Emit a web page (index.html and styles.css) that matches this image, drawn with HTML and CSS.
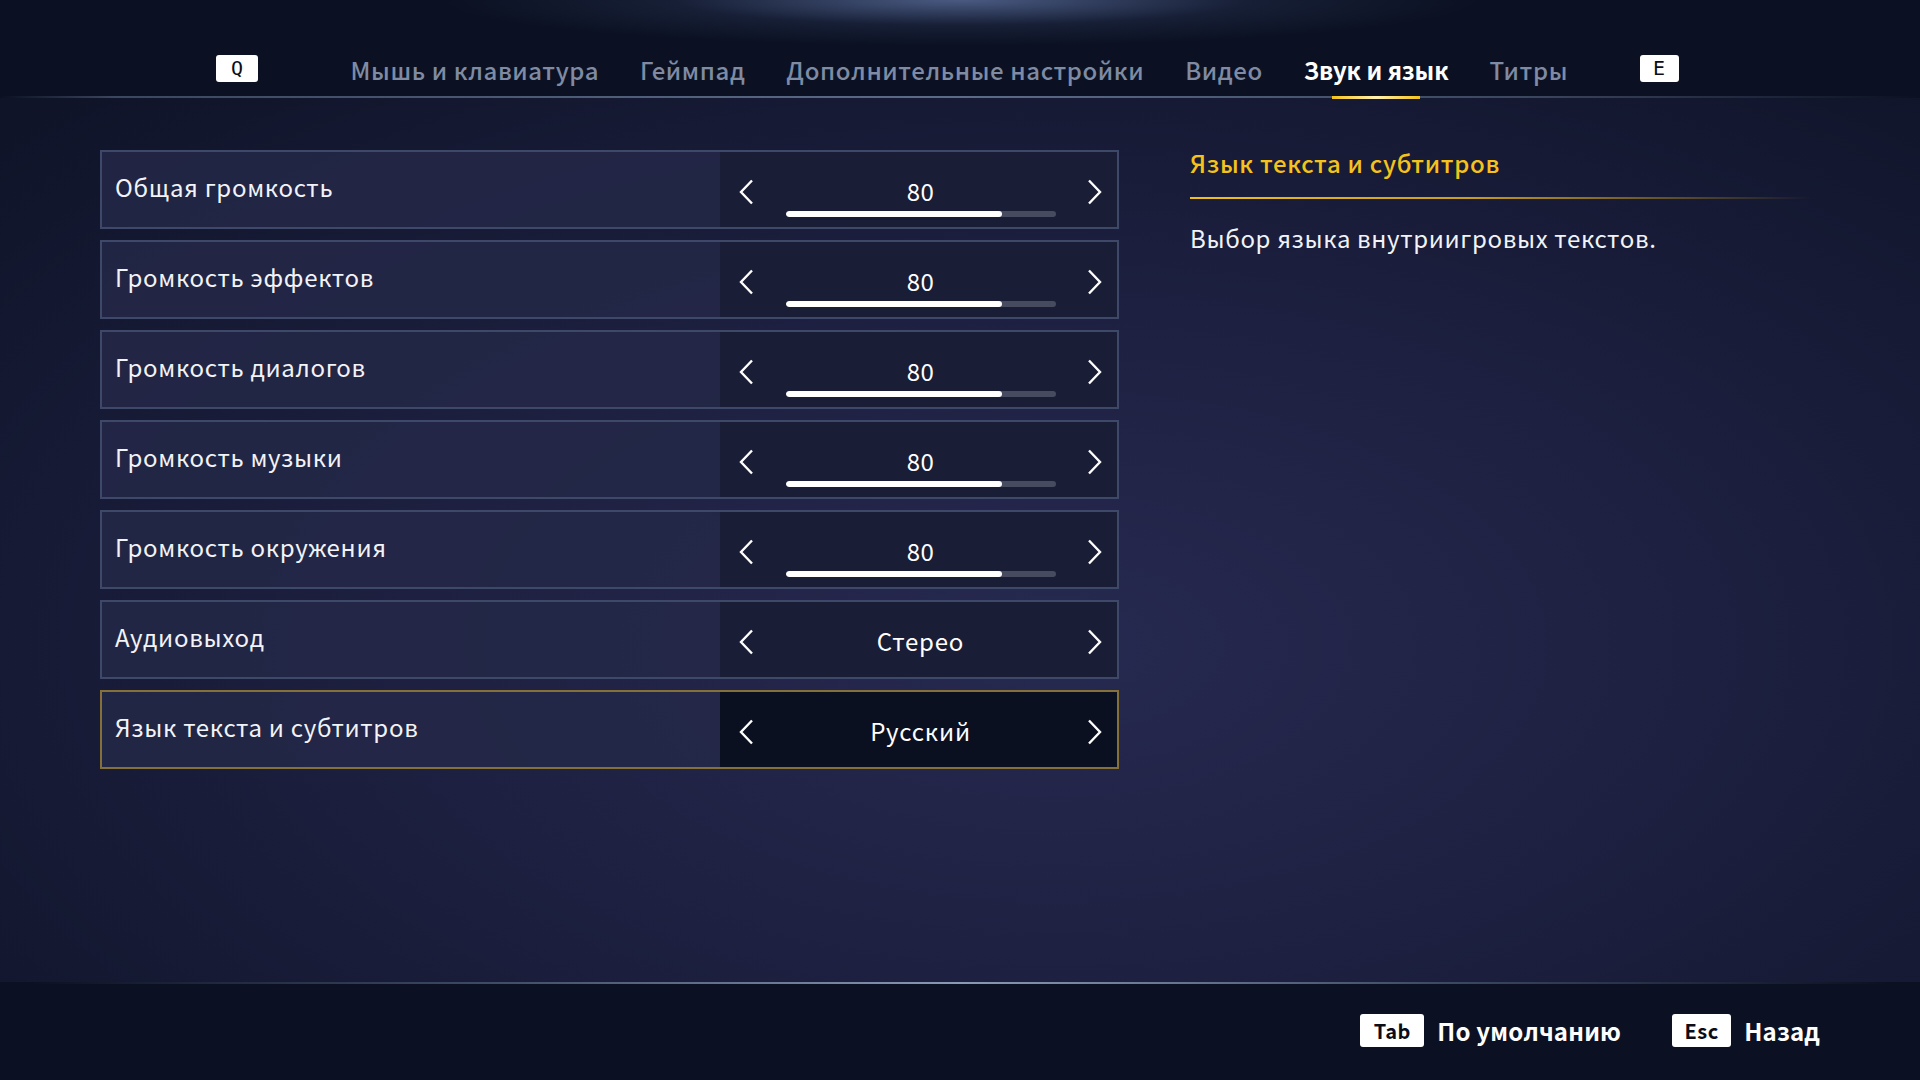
FILE: index.html
```html
<!DOCTYPE html>
<html lang="ru">
<head>
  <meta charset="UTF-8" />
  <title>Настройки — Звук и язык</title>
  <link rel="stylesheet" href="styles.css">
</head>
<body>
<div class="screen">
  <div class="header">
    <div class="key key-q">Q</div>
    <div class="tabs">
      <div class="tab">Мышь и клавиатура</div>
      <div class="tab">Геймпад</div>
      <div class="tab">Дополнительные настройки</div>
      <div class="tab">Видео</div>
      <div class="tab active">Звук и язык</div>
      <div class="tab">Титры</div>
    </div>
    <div class="key key-e">E</div>
  </div>

  <div class="main">
    <div class="list">
      <div class="row">
        <div class="label">Общая громкость</div>
        <div class="control">
          <svg class="arrow" viewBox="0 0 16 26"><path d="M14 1.5 L3 13 L14 24.5"/></svg>
          <div class="mid">
            <div class="value">80</div>
            <div class="bar"><div class="fill" style="width:80%"></div></div>
          </div>
          <svg class="arrow" viewBox="0 0 16 26"><path d="M2 1.5 L13 13 L2 24.5"/></svg>
        </div>
      </div>
      <div class="row">
        <div class="label">Громкость эффектов</div>
        <div class="control">
          <svg class="arrow" viewBox="0 0 16 26"><path d="M14 1.5 L3 13 L14 24.5"/></svg>
          <div class="mid">
            <div class="value">80</div>
            <div class="bar"><div class="fill" style="width:80%"></div></div>
          </div>
          <svg class="arrow" viewBox="0 0 16 26"><path d="M2 1.5 L13 13 L2 24.5"/></svg>
        </div>
      </div>
      <div class="row">
        <div class="label">Громкость диалогов</div>
        <div class="control">
          <svg class="arrow" viewBox="0 0 16 26"><path d="M14 1.5 L3 13 L14 24.5"/></svg>
          <div class="mid">
            <div class="value">80</div>
            <div class="bar"><div class="fill" style="width:80%"></div></div>
          </div>
          <svg class="arrow" viewBox="0 0 16 26"><path d="M2 1.5 L13 13 L2 24.5"/></svg>
        </div>
      </div>
      <div class="row">
        <div class="label">Громкость музыки</div>
        <div class="control">
          <svg class="arrow" viewBox="0 0 16 26"><path d="M14 1.5 L3 13 L14 24.5"/></svg>
          <div class="mid">
            <div class="value">80</div>
            <div class="bar"><div class="fill" style="width:80%"></div></div>
          </div>
          <svg class="arrow" viewBox="0 0 16 26"><path d="M2 1.5 L13 13 L2 24.5"/></svg>
        </div>
      </div>
      <div class="row">
        <div class="label">Громкость окружения</div>
        <div class="control">
          <svg class="arrow" viewBox="0 0 16 26"><path d="M14 1.5 L3 13 L14 24.5"/></svg>
          <div class="mid">
            <div class="value">80</div>
            <div class="bar"><div class="fill" style="width:80%"></div></div>
          </div>
          <svg class="arrow" viewBox="0 0 16 26"><path d="M2 1.5 L13 13 L2 24.5"/></svg>
        </div>
      </div>
      <div class="row">
        <div class="label">Аудиовыход</div>
        <div class="control">
          <svg class="arrow" viewBox="0 0 16 26"><path d="M14 1.5 L3 13 L14 24.5"/></svg>
          <div class="mid">
            <div class="value text">Стерео</div>
          </div>
          <svg class="arrow" viewBox="0 0 16 26"><path d="M2 1.5 L13 13 L2 24.5"/></svg>
        </div>
      </div>
      <div class="row selected">
        <div class="label">Язык текста и субтитров</div>
        <div class="control">
          <svg class="arrow" viewBox="0 0 16 26"><path d="M14 1.5 L3 13 L14 24.5"/></svg>
          <div class="mid">
            <div class="value text">Русский</div>
          </div>
          <svg class="arrow" viewBox="0 0 16 26"><path d="M2 1.5 L13 13 L2 24.5"/></svg>
        </div>
      </div>
    </div>

    <div class="info">
      <div class="info-title">Язык текста и субтитров</div>
      <div class="info-text">Выбор языка внутриигровых текстов.</div>
    </div>
  </div>

  <div class="footer">
    <div class="hint"><span class="key key-wide">Tab</span>По умолчанию</div>
    <div class="hint"><span class="key key-wide">Esc</span>Назад</div>
  </div>
</div>
</body>
</html>
```

FILE: styles.css
```css
* { box-sizing: border-box; margin: 0; padding: 0; }
html, body { height: 100%; background: #0b1122; overflow: hidden; }
body { font-family: "Noto Sans CJK SC", "Noto Sans", sans-serif; color: #fff; }
.screen { display: flex; flex-direction: column; height: 1080px; }

/* header with tabs */
.header {
  height: 98px; flex: none; display: flex; align-items: center; padding: 44px 0 0 216px;
  background: radial-gradient(ellipse 520px 46px at 50% 0, rgba(80, 98, 140, 0.9), rgba(40, 52, 84, 0.4) 55%, transparent 100%), #0b1122;
  position: relative;
}
.header::after {
  content: ""; position: absolute; left: 0; right: 0; bottom: 0; height: 2px;
  background: linear-gradient(90deg, rgba(60, 72, 96, 0) 0%, #3b4760 6%, #5c6c88 50%, #3a465e 80%, rgba(40, 50, 70, 0) 100%);
}
.key { background: #fff; color: #0a0d18; border-radius: 3px; display: inline-flex; align-items: center; justify-content: center; }
.key-q, .key-e { height: 27px; font-family: "DejaVu Sans Mono", monospace; font-size: 20px; }
.key-q { width: 42px; margin-right: 72px; margin-top: -6px; }
.key-e { width: 39px; margin-left: 51px; margin-top: -6px; }
.tabs { display: flex; height: 100%; }
.tab { position: relative; display: flex; align-items: center; padding: 0 20.5px 4px; font-size: 24px; font-weight: 500; color: #7e8ba3; letter-spacing: 0.6px; }
.tab.active { color: #fff; font-weight: bold; letter-spacing: -0.1px; }
.tab.active::after {
  content: ""; position: absolute; left: 49px; right: 49px; bottom: -1px; height: 3px; z-index: 1;
  background: linear-gradient(90deg, #f4c21a, #fff1b0 50%, #f4c21a);
}

/* main area */
.main {
  flex: 1; display: flex; padding: 52px 0 0 100px;
  background: radial-gradient(ellipse 75% 85% at 55% 62%, #272a50 0%, #1d2040 45%, #0f1429 100%);
}
.list { width: 1019px; display: flex; flex-direction: column; gap: 11px; }
.row { height: 79px; display: flex; border: 2px solid #3e496a; background: rgba(36, 40, 72, 0.85); }
.row.selected { border-color: #85703a; }
.label { flex: 1; display: flex; align-items: center; padding: 0 0 6px 13px; font-size: 24px; letter-spacing: 0.7px; color: #f2f3f7; }
.control { width: 397px; display: flex; align-items: flex-start; justify-content: space-between; padding: 0 14px 0 18px; background: #1a1d36; }
.selected .control { background: #0b1021; }
.arrow { width: 16px; height: 26px; margin-top: 27px; fill: none; stroke: #fff; stroke-width: 2.4; }
.mid { width: 270px; display: flex; flex-direction: column; align-items: center; padding-top: 23px; }
.value { font-size: 24px; line-height: 32px; letter-spacing: 0.5px; color: #fff; }
.value.text { font-size: 24px; letter-spacing: 0.8px; }
.bar { width: 270px; height: 6px; margin-top: 4px; border-radius: 3px; background: #464b60; overflow: hidden; }
.fill { height: 100%; background: #fff; border-radius: 3px; }

/* description panel */
.info { margin-left: 71px; width: 620px; }
.info-title {
  font-size: 24px; font-weight: 500; color: #f5c21b; letter-spacing: 0.7px; line-height: 30px; padding: 0 0 19px 0; margin-top: -2px;
  border-bottom: 2px solid transparent;
  border-image: linear-gradient(90deg, #f2c01c 0%, #c99d1d 45%, rgba(150, 120, 40, 0) 100%) 1;
}
.info-text { margin-top: 21px; font-size: 24px; letter-spacing: 0.65px; color: #f2f3f7; }

/* footer */
.footer {
  height: 98px; flex: none; display: flex; align-items: center; justify-content: flex-end; gap: 51px; padding: 0 100px 2px 0;
  background: #0b1122; position: relative;
}
.footer::before {
  content: ""; position: absolute; left: 30px; right: 30px; top: 0; height: 2px;
  background: linear-gradient(90deg, rgba(60, 80, 100, 0) 0%, #3f4c66 25%, #8a9ab4 50%, #3f4c66 75%, rgba(60, 80, 100, 0) 100%);
}
.hint { display: flex; align-items: center; font-size: 24px; font-weight: bold; letter-spacing: 0.2px; }
.key-wide { height: 33px; margin-right: 13px; font-size: 20px; font-weight: bold; letter-spacing: 0.5px; font-family: "Noto Sans CJK SC", sans-serif; }
.hint:first-child .key-wide { width: 64px; }
.hint:last-child .key-wide { width: 59px; }
```
